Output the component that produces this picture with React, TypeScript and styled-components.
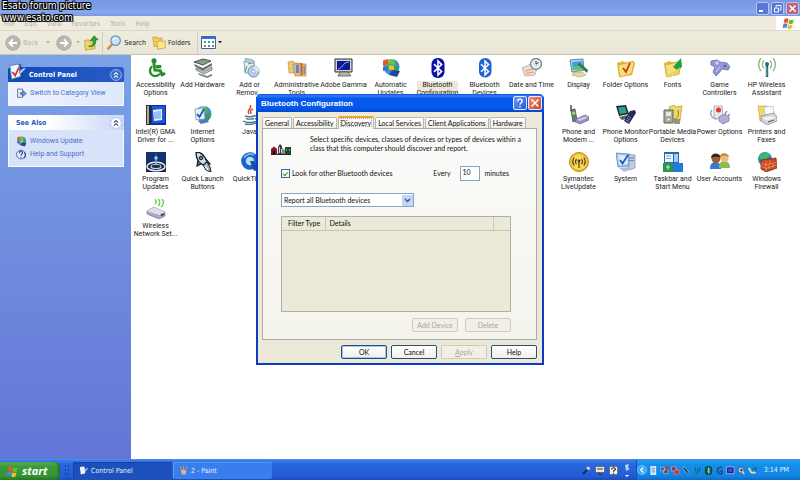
import React, { ReactNode } from 'react';
import styled, { createGlobalStyle, css } from 'styled-components';

const UI = `"DejaVu Sans Condensed", "DejaVu Sans", "Noto Sans", sans-serif`;
const LABEL = `Roboto, "Noto Sans", sans-serif`;
const CLASSIC = `Lato, "Liberation Sans", Arial, sans-serif`;

const GlobalStyle = createGlobalStyle`
  *, *::before, *::after { box-sizing: border-box; }
  body { margin: 0; background: #fff; font: 7px/8px ${UI}; color: #222; }
  button, input, select { font: inherit; color: inherit; margin: 0; padding: 0; border: 0; background: none; }
  svg { display: block; flex: none; }
`;

/* ---------- window frame ---------- */

const Page = styled.div`
  position: relative;
  display: flex;
  flex-direction: column;
  min-height: 100vh;
  overflow: hidden;
`;

const Watermark = styled.div`
  position: absolute;
  left: 2px;
  top: 0;
  z-index: 5;
  font: 10px/12px ${UI};
  color: #fff;
  text-shadow: 1px 0 #000, -1px 0 #000, 0 1px #000, 0 -1px #000, 1px 1px #000, -1px -1px #000, 1px -1px #000,
    -1px 1px #000;
`;

const TitleBar = styled.header`
  display: flex;
  justify-content: flex-end;
  align-items: center;
  gap: 2px;
  height: 16px;
  padding: 0 1px;
  background: linear-gradient(#7a98e4 0, #7d9ce6 40%, #86a8ec 75%, #7b96e0 100%);
`;

const CaptionButton = styled.button<{ $close?: boolean }>`
  display: grid;
  place-items: center;
  width: 13px;
  height: 13px;
  border: 1px solid #b6c6f0;
  border-radius: 2px;
  background: ${(p) => (p.$close ? '#bb6678' : '#5577d8')};
`;

const MenuBar = styled.nav`
  display: flex;
  align-items: center;
  gap: 10px;
  height: 15px;
  padding-left: 4px;
  background: #eeebde;
  border-bottom: 1px solid #dcd8c8;
`;

const MenuItem = styled.button`
  padding-top: 1px;
  color: #b2b0a8;
`;

const FlagBox = styled.div`
  display: grid;
  place-items: center;
  width: 24px;
  height: 14px;
  margin-left: auto;
  background: #fff;
`;

const ToolBar = styled.div`
  display: flex;
  align-items: center;
  gap: 3px;
  height: 24px;
  padding-left: 5px;
  background: linear-gradient(#efecdf, #e9e6d6);
  border-bottom: 1px solid #c9c5b4;
`;

const Tool = styled.button<{ $dim?: boolean }>`
  display: flex;
  align-items: center;
  gap: 2px;
  height: 20px;
  color: ${(p) => (p.$dim ? '#b3b1a8' : '#222')};
`;

const Spacer = styled.span<{ $w: number }>`
  width: ${(p) => p.$w}px;
`;

const Divider = styled.span`
  width: 1px;
  height: 22px;
  background: #d2cebf;
`;

const Body = styled.div`
  display: flex;
  flex: 1;
`;

/* ---------- side bar ---------- */

const Side = styled.aside`
  display: flex;
  flex-direction: column;
  gap: 9px;
  width: 131px;
  flex: none;
  padding: 12px 7px 0 8px;
  background: linear-gradient(#7ba2e7, #6375d6);
`;

const Panel = styled.section`
  background: linear-gradient(90deg, #eff3fd, #dfe8fb);
`;

const PanelHead = styled.h2<{ $primary?: boolean }>`
  display: flex;
  align-items: center;
  height: 15px;
  margin: 0;
  padding: 0 2px 0 8px;
  border-radius: 2px 2px 0 0;
  font: bold 7px/8px ${UI};
  color: #2a56bd;
  background: linear-gradient(90deg, #fff 35%, #c8d5f7);
  ${(p) =>
    p.$primary &&
    css`
      padding-left: 0;
      color: #fff;
      background: linear-gradient(90deg, #0f4ab8, #2a5cc9);
    `}
`;

const HeadIcon = styled.span`
  display: block;
  margin: -6px 3px 0 0;
`;

const Collapse = styled.button`
  margin-left: auto;
`;

const LinkList = styled.ul<{ $tall?: boolean }>`
  display: flex;
  flex-direction: column;
  gap: 3px;
  margin: 0;
  padding: 6px 7px 7px;
  list-style: none;
  font-family: ${LABEL};
  background: ${(p) => (p.$tall ? '#d8e2f9' : 'transparent')};
  border: 1px solid #f6f8fe;
  border-top: 0;
`;

const SideLink = styled.a`
  display: flex;
  align-items: center;
  gap: 3px;
  height: 10px;
  color: #4a70c8;
  text-decoration: none;
  white-space: nowrap;
`;

/* ---------- icon grid ---------- */

const IconGrid = styled.main`
  flex: 1;
  display: grid;
  grid-template-columns: repeat(auto-fill, 47px);
  grid-auto-rows: min-content;
  align-content: start;
  row-gap: 5px;
  padding: 3px 0 0 1px;
  background: #fff;
  font-family: ${LABEL};
`;

const Item = styled.button<{ $col?: number }>`
  display: flex;
  flex-direction: column;
  align-items: center;
  justify-content: flex-start;
  gap: 3px;
  min-width: 0;
  height: 42px;
  ${(p) => p.$col && `grid-column-start: ${p.$col};`}
`;

const ItemLabel = styled.span<{ $selected?: boolean }>`
  white-space: pre;
  text-align: center;
  line-height: 8px;
  background: ${(p) => (p.$selected ? '#ece9d8' : 'none')};
`;

/* ---------- dialog ---------- */

const Dialog = styled.section`
  position: absolute;
  left: 256px;
  top: 94px;
  width: 288px;
  border: 2px solid #0c3cc4;
  border-top: 0;
  border-radius: 5px 5px 0 0;
  background: #ece9d8;
  font: 7px/9px ${CLASSIC};
  color: #111;
`;

const DialogTitle = styled.header`
  display: flex;
  align-items: center;
  gap: 1px;
  height: 18px;
  margin: 0 -2px;
  padding: 0 2px 0 5px;
  border-radius: 5px 5px 0 0;
  background: linear-gradient(#0a4fd8 0, #2f7df5 10%, #0658ea 25%, #0459ec 75%, #0448cc 100%);
  h1 {
    flex: 1;
    margin: 0;
    padding-top: 1px;
    font: bold 8px/12px "Liberation Sans", Arial, sans-serif;
    color: #fff;
  }
`;

const DialogCaption = styled.button<{ $close?: boolean }>`
  display: grid;
  place-items: center;
  width: 14px;
  height: 14px;
  border: 1px solid #e4ebfb;
  border-radius: 2px;
  background: ${(p) =>
    p.$close ? 'linear-gradient(135deg, #ee8f74, #d4441c)' : 'linear-gradient(135deg, #6f9cf4, #2458dc)'};
`;

const DialogBody = styled.div`
  padding: 4px 5px 4px 4px;
`;

const Tabs = styled.div`
  display: flex;
  align-items: flex-end;
  gap: 1px;
  height: 12px;
`;

const Tab = styled.button<{ $active?: boolean }>`
  height: 11px;
  padding: 0 2px;
  border: 1px solid #b5b8b4;
  border-bottom: 0;
  border-radius: 2px 2px 0 0;
  background: linear-gradient(#fff, #f0efe6);
  white-space: nowrap;
  ${(p) =>
    p.$active &&
    css`
      height: 13px;
      margin-bottom: -1px;
      border-top: 2px solid #e9a13a;
      background: #fbfbf9;
      outline: 1px dotted #a8a8a0;
      outline-offset: -3px;
    `}
`;

const TabPage = styled.div`
  display: flex;
  flex-direction: column;
  padding: 4px 25px 7px 18px;
  border: 1px solid #a9aca6;
  background: linear-gradient(#fbfbfa, #f4f3ec);
`;

const Intro = styled.div`
  display: flex;
  align-items: center;
  gap: 19px;
  margin-left: -10px;
  margin-right: -20px;
  p {
    margin: 0;
    white-space: nowrap;
  }
`;

const IntroIcon = styled.span`
  margin-top: 10px;
`;

const ScanRow = styled.div`
  display: flex;
  align-items: center;
  justify-content: space-between;
  margin-top: 11px;
`;

const Check = styled.label`
  display: flex;
  align-items: center;
  gap: 2px;
  input {
    appearance: none;
    display: grid;
    place-items: center;
    width: 9px;
    height: 9px;
    border: 1px solid #3c6a94;
    background: #f8faf8;
  }
  input:checked::after {
    content: '';
    width: 3px;
    height: 5px;
    margin-top: -1px;
    border: solid #25a52b;
    border-width: 0 1px 1px 0;
    transform: rotate(45deg);
  }
`;

const Interval = styled.label`
  display: flex;
  align-items: center;
  gap: 5px;
  margin-right: 2px;
  input {
    width: 20px;
    height: 15px;
    margin-left: 4px;
    padding: 0 0 3px 2px;
    border: 1px solid #86a5c4;
    background: #fff;
  }
`;

const SelectBox = styled.div`
  display: grid;
  grid-template-columns: 1fr 11px;
  align-items: center;
  width: 133px;
  height: 14px;
  margin-top: 12px;
  border: 1px solid #86a5c4;
  background: #fff;
  select {
    grid-area: 1 / 1 / 2 / 3;
    appearance: none;
    width: 100%;
    height: 12px;
    padding-left: 2px;
  }
  svg {
    grid-area: 1 / 2;
    pointer-events: none;
  }
`;

const ListFrame = styled.div`
  min-height: 96px;
  margin-top: 9px;
  border: 1px solid #a9b0a8;
  background: #ece9d8;
`;

const ListTable = styled.table`
  width: 100%;
  border-collapse: collapse;
  table-layout: fixed;
  th {
    height: 13px;
    padding: 0 0 0 4px;
    border-right: 1px solid #cbc7b8;
    border-bottom: 1px solid #c8c4b0;
    font-weight: normal;
    text-align: left;
  }
  th:first-child {
    padding-left: 6px;
  }
  th:last-child {
    border-right: 0;
  }
`;

const ButtonRow = styled.div<{ $gap: number; $top: number }>`
  display: flex;
  justify-content: flex-end;
  gap: ${(p) => p.$gap}px;
  margin-top: ${(p) => p.$top}px;
`;

const PushButton = styled.button<{ $default?: boolean }>`
  width: 46px;
  height: 14px;
  border: 1px solid #24507e;
  border-radius: 2px;
  background: linear-gradient(#fff, #f0efe8);
  ${(p) => p.$default && 'box-shadow: inset 0 0 0 1px #a8c4f0;'}
  &:disabled {
    border-color: #cdcabb;
    background: #f2f0e6;
    color: #aaa799;
  }
`;

/* ---------- task bar ---------- */

const TaskBar = styled.footer`
  display: flex;
  align-items: stretch;
  height: 21px;
  border-top: 1px solid #4a8cf0;
  background: linear-gradient(#3a80ee 0, #2a66de 20%, #245cd8 80%, #1d4cb8 100%);
  color: #e8f0ff;
`;

const Start = styled.button`
  display: flex;
  align-items: center;
  gap: 3px;
  width: 60px;
  margin-top: 2px;
  padding-left: 6px;
  border-radius: 0 5px 5px 0;
  background: linear-gradient(#5fb358 0, #3c9a3a 25%, #359434 75%, #287a28 100%);
  box-shadow: inset -2px 0 2px #2a7228;
  font: italic bold 11px/14px "Open Sans", "Noto Sans", sans-serif;
  color: #fff;
`;

const Grip = styled.span`
  width: 5px;
  margin: 4px 4px 3px;
  background: radial-gradient(circle, #163fa4 1px, transparent 1px) 0 0 / 3px 4px;
`;

const Task = styled.button<{ $active?: boolean }>`
  display: flex;
  align-items: center;
  gap: 3px;
  width: 99px;
  margin: 2px 1px 1px 0;
  padding-left: 6px;
  border-radius: 2px;
  background: ${(p) => (p.$active ? '#1e50bc' : '#3a7eee')};
  box-shadow: inset 1px 1px ${(p) => (p.$active ? '#1841a0' : '#5a98f6')};
`;

const Quick = styled.div`
  display: flex;
  align-items: center;
  gap: 4px;
  margin-left: auto;
  padding-right: 5px;
`;

const Tray = styled.div`
  display: flex;
  align-items: center;
  gap: 2px;
  width: 164px;
  background: linear-gradient(#2a9cf0 0, #1490ea 20%, #1284e2 80%, #0e6cc8 100%);
  border-left: 1px solid #1552b8;
`;

const Clock = styled.time`
  margin-left: auto;
  padding-right: 11px;
`;

/* ---------- drawings ---------- */

const Svg = ({ s = 20, h, vb, children }: { s?: number; h?: number; vb?: string; children: ReactNode }) => (
  <svg width={s} height={h ?? s} viewBox={vb ?? '0 0 20 20'} aria-hidden="true">
    {children}
  </svg>
);

const Rune = ({ w = 1.5 }: { w?: number }) => (
  <path d="M6 6.2l7.6 7.2L10 17V3l3.6 3.6L6 13.8" fill="none" stroke="#fff" strokeWidth={w} />
);

const Flag = ({ s = 14 }: { s?: number }) => (
  <Svg s={s} vb="0 0 16 16">
    <path d="M3 2.5c2-1.3 3.500-.9 5 0L7 7.500c-1.500-.9-3-1-5 0z" fill="#e8582c" />
    <path d="M9 3c1.500.9 3 1 5.500 0l-1.300 5c-2 1-3.700.9-5.200 0z" fill="#6fb52e" />
    <path d="M1.800 8.500c2-1.200 3.500-.9 5 0l-1.200 5c-1.600-.9-3-1-5 0z" fill="#4a84e4" />
    <path d="M7.800 9c1.500.9 3 1 5.200 0l-1.300 5c-2 1-3.700.9-5.100 0z" fill="#f6bd27" />
  </Svg>
);

const folder = (
  <>
    <path d="M1 5l6-2 2 1.500L17 3l2 2-3 12-13 2z" fill="#e0b63c" />
    <path d="M2 7l15-3.500 1 2L15.500 16 4 19z" fill="#f7e07a" stroke="#c99b2c" strokeWidth=".7" />
  </>
);

const globe = (
  <>
    <circle cx="10.500" cy="9" r="8" fill="#3f8fd8" />
    <path d="M5 4c3-3 7-3 10-.5l-1 4-3 1-1 4-3-2-3-.5z" fill="#4fb657" />
    <path d="M14 9l4-1c.4 3-1 6-4 8l-2-3z" fill="#3a9c50" />
    <path d="M5 5c2-2.500 5-3.500 7-3" stroke="#bfe6ff" fill="none" />
  </>
);

const art: Record<string, ReactNode> = {
  access: (
    <g fill="none" stroke="#218c2b" strokeWidth="3" strokeLinecap="round">
      <circle cx="8" cy="2.800" r="1.800" fill="#218c2b" strokeWidth="1.500" />
      <path d="M8 6l1 6 5 .2 2 4.500 2-.8M9 8.800l5-.3" />
      <path d="M5.500 9a5 5 0 1 0 7.500 7.500" strokeWidth="2.400" />
      <path d="M9 6l1 5 5 .5" stroke="#62c965" strokeWidth=".8" />
    </g>
  ),
  hardware: (
    <>
      <path d="M1 4l9-3 8 2-8 4z" fill="#8f9893" stroke="#4a514e" />
      <path d="M1 6l9 4 9-5v2.500l-9 5-8-4z" fill="#5f6d64" />
      <path d="M3 10l8 3 8-4v3l-8 4-8-4z" fill="#b8bdc4" stroke="#55585f" strokeWidth=".6" />
      <path d="M5 15l9 3 5-2v2l-5 2-8-3z" fill="#7c838b" />
      <path d="M6 4l5-1.500" stroke="#5eb35d" />
      <path d="M5 7.500l5 2 6-3.500" stroke="#dfe5e4" strokeWidth=".8" fill="none" />
    </>
  ),
  addRemove: (
    <>
      <path d="M4 3h10l1 12H5z" fill="#e6eef8" stroke="#8aa0bd" />
      <path d="M5 0l8 2 1 4-8-2z" fill="#b9cbe0" stroke="#7d93b0" strokeWidth=".6" />
      <path d="M7 8l-2 6M8 6l3-1" stroke="#48a35c" />
      <circle cx="13.500" cy="13.500" r="5.500" fill="#b9cdf0" stroke="#7286b5" />
      <path d="M13.500 8a5.500 5.500 0 0 1 5.500 5.500h-4z" fill="#d9f0d6" />
      <circle cx="13.500" cy="13.500" r="1.600" fill="#fff" stroke="#7286b5" strokeWidth=".6" />
    </>
  ),
  admin: (
    <>
      <path d="M1 4l5-1 2 2h5v10H2z" fill="#eec768" stroke="#b78e3a" strokeWidth=".6" />
      <path d="M6 6h13v12H8z" fill="#e3bd72" stroke="#9c7d4a" strokeWidth=".6" />
      <path d="M9 7h3v8H9z" fill="#5a86cf" />
      <path d="M13.500 5h2v12h-2z" fill="#c65b38" />
      <path d="M16.500 8H18v8h-1.500z" fill="#7e8ba8" />
      <circle cx="7" cy="10" r="2" fill="#9fb4d8" />
    </>
  ),
  gamma: (
    <>
      <path d="M1 1h17v13H1z" fill="#d7d3c7" stroke="#2c2c34" />
      <path d="M3 3h13v9H3z" fill="#10179c" />
      <path d="M4 11c4-1 5-4 6-5s3-2 5-2" stroke="#6ecbff" fill="none" />
      <path d="M6 14h8l3 4H4z" fill="#b8b4a8" stroke="#44444c" strokeWidth=".7" />
    </>
  ),
  update: (
    <>
      {globe}
      <path d="M2 2.500l5-1.500v5L2 8z" fill="#e5562c" />
      <path d="M8 1l5 1.500v4L8 6z" fill="#7cc03a" />
      <path d="M2 9l5-1v4l-5 1z" fill="#3d73df" />
      <path d="M8 7.500l5 .5v4l-5-.5z" fill="#f4c02e" />
      <path d="M11 12l8 1-3 6-8-2z" fill="#1c4a9a" />
    </>
  ),
  btDark: (
    <>
      <rect x="3.500" y="0" width="13" height="20" rx="6" fill="#0b10a8" />
      <Rune w={1.6} />
    </>
  ),
  bt: (
    <>
      <rect x="4" y="0" width="12.500" height="19.500" rx="6" fill="#1c63d6" />
      <Rune />
    </>
  ),
  date: (
    <>
      <path d="M0 10l9-4 6 4-2 7-10 1z" fill="#efdccd" stroke="#b79a88" strokeWidth=".7" />
      <path d="M3 13l8-2M4 15.500l8-1.500" stroke="#d59a84" />
      <circle cx="14" cy="6" r="5.500" fill="#dfeaf0" stroke="#77858f" strokeWidth="1.300" />
      <path d="M14 3v3.200l2.500-1.700" stroke="#38434c" fill="none" />
    </>
  ),
  display: (
    <>
      <path d="M1 2l13-1 1 11-12 2z" fill="#b7d3ee" stroke="#5b7fa8" />
      <path d="M3 4l10-1 .7 8L4 12z" fill="#3ba0e0" />
      <path d="M3 11c3-5 6-2 10-4v4l-9 1z" fill="#5cc26a" />
      <path d="M8 6l10 9 1-3-8-7z" fill="#2e7d45" />
      <path d="M5 14h8l4 3-6 2-8-2z" fill="#e0d9a0" stroke="#a39b6c" strokeWidth=".6" />
    </>
  ),
  folderOpt: (
    <>
      {folder}
      <path d="M7 10l3 4 4-9" stroke="#d4341c" strokeWidth="1.800" fill="none" />
    </>
  ),
  fonts: (
    <>
      {folder}
      <path d="M10 9l8-9 1 9-5 3z" fill="#24a04a" />
      <path d="M3 16c5 0 9-2 14-7l-2 8-11 2z" fill="#ead05c" />
    </>
  ),
  game: (
    <>
      <path d="M1 3l6-1 3 2 7 1 3 4-2 3-6-1-3 4-3 3-3-4 2-5-4-2z" fill="#9495d4" stroke="#62639f" strokeWidth=".7" />
      <circle cx="7" cy="5" r="1.800" fill="#d3d4f3" />
      <circle cx="15" cy="8" r="1.300" fill="#5c5d9e" />
      <path d="M6 14l4-5" stroke="#d0d0f2" />
    </>
  ),
  wireless: (
    <g fill="none">
      <path d="M7 2.500a6 6 0 0 0 0 8M13 2.500a6 6 0 0 1 0 8M4 0a10 10 0 0 0 0 13M16 0a10 10 0 0 1 0 13" stroke="#8cbc84" strokeWidth="1.500" />
      <circle cx="10" cy="6" r="2" fill="#2a6f83" />
      <path d="M10 7v12" stroke="#1d6177" strokeWidth="2.400" />
      <path d="M9.700 9v9" stroke="#86c3cc" strokeWidth=".7" />
    </g>
  ),
  intel: (
    <>
      <path d="M0 0h20v20H0z" fill="#0c2f9c" />
      <path d="M1 1h4v18H1z" fill="#caa742" />
      <path d="M3 1h2v18H3z" fill="#182454" />
      <path d="M6 1h13v17H6z" fill="#1b56d4" />
      <path d="M7 5l9-1v11l-8 1z" fill="#e9f2fd" />
      <path d="M8 7l7-1.500V14H8z" fill="#9cc0f2" />
    </>
  ),
  internet: (
    <>
      {globe}
      <path d="M2 4l9-1 1 11-9 1z" fill="#e6effa" stroke="#6688b8" strokeWidth=".7" />
      <path d="M4 9l2.500 3L11 4" stroke="#2553b0" strokeWidth="1.800" fill="none" />
      <path d="M5 16l9-2 2 3-8 2z" fill="#4f7ab8" />
    </>
  ),
  java: (
    <g fill="none">
      <path d="M10 0c3 3-4 5-1 9M13 4c-4 2-2 3-2 5" stroke="#da4534" strokeWidth="1.500" />
      <path d="M5 11c3 1 7 1 10-.5M6 13.500c3 1 5 1 8 0M15 11c3-1 3 2 0 3" stroke="#4d7196" strokeWidth="1.400" />
      <path d="M3 16c4 2 11 2 14 0M5 19c4 .7 8 .5 11-1" stroke="#4d7196" strokeWidth="1.300" />
    </g>
  ),
  phone: (
    <>
      <path d="M2 5l4-1 2 11-4 2z" fill="#6b7a72" stroke="#364039" strokeWidth=".7" />
      <path d="M2 0v6" stroke="#444" strokeWidth="1.400" />
      <path d="M3 7l3-.7.5 3-3 .7z" fill="#93dc74" />
      <path d="M7 14l9-4 4 2v3l-9 4-5-2z" fill="#9391c4" stroke="#5f5c90" strokeWidth=".6" />
      <path d="M8 14.500l8-3 3 1-8 3.500z" fill="#cccbe8" />
    </>
  ),
  monitor: (
    <>
      <path d="M0 1l10-1 3 9-10 2z" fill="#22282c" />
      <path d="M2 2.500l7-.8 2 6-7 1.500z" fill="#21a199" />
      <path d="M3 12l9-2 2 3-8 2z" fill="#555d60" />
      <path d="M14 6l5-1 1 3-7 11-5-3z" fill="#2b2b50" />
      <path d="M12 11l3 2M11 13l3 2M10 15l3 1.500" stroke="#8585cd" />
    </>
  ),
  media: (
    <>
      <path d="M6 2l5-2 2 2 6-1-2 15H9z" fill="#f1d866" stroke="#bd9a2d" strokeWidth=".7" />
      <path d="M1 5h9v13H1z" fill="#aaafa4" stroke="#5e635b" />
      <path d="M3 7h5v4H3z" fill="#dfeadc" />
      <circle cx="5.500" cy="14.500" r="1.800" fill="#e8e8e4" stroke="#666" strokeWidth=".5" />
      <path d="M11 14c4 0 5-4 4-9" stroke="#8e7b26" fill="none" />
      <path d="M11 14h6v5h-6z" fill="#8e968c" />
    </>
  ),
  power: (
    <>
      <path d="M4 1h8l1 11-7 2-2-2z" fill="#ebe5e8" stroke="#a6a0ac" strokeWidth=".8" />
      <circle cx="8.500" cy="5" r="2.500" fill="#d93a2a" />
      <path d="M2 5c-3 4 0 9 5 9" stroke="#a3a2cb" strokeWidth="1.500" fill="none" />
      <path d="M9 12l6-3 4 3v4l-6 3-4-3z" fill="#b0aed8" stroke="#6e6b9f" strokeWidth=".7" />
      <path d="M15 9l2-3M18 11l2-2" stroke="#77749c" strokeWidth="1.200" />
    </>
  ),
  printer: (
    <>
      <path d="M1 1h9l1 13-8 2z" fill="#f3d768" stroke="#c09c3a" strokeWidth=".6" />
      <path d="M7 2l9-1 1 9H8z" fill="#f8faff" stroke="#9faec5" strokeWidth=".6" />
      <path d="M4 11l13-3 3 4v4l-10 4-6-4z" fill="#d5d5d8" stroke="#83838e" strokeWidth=".7" />
      <path d="M5 13l8-1.500 6 1-9 3z" fill="#f4f4f6" />
      <path d="M11 17l6-2" stroke="#5a5d66" />
    </>
  ),
  program: (
    <>
      <path d="M0 0h20v20H0z" fill="#123272" />
      <path d="M0 12c6-4 14-4 20 0v8H0z" fill="#1a2342" />
      <ellipse cx="10" cy="14.500" rx="9" ry="4.200" fill="none" stroke="#e6edf6" strokeWidth="1.500" />
      <ellipse cx="10" cy="14.500" rx="5" ry="2" fill="none" stroke="#c6d2e2" strokeWidth="1.200" />
      <path d="M10 0l1 12H9z" fill="#6ab1ef" />
      <circle cx="10" cy="6" r="1.800" fill="#9ccbf6" />
    </>
  ),
  launch: (
    <>
      <path d="M3 0c5 0 9 4 11 10l-4 3C6 11 3 7 3 0z" fill="#d6dfe8" stroke="#15181c" strokeWidth="1.300" />
      <circle cx="8" cy="6" r="1.800" fill="#4c86b8" stroke="#15181c" />
      <path d="M5 8l-1 6 4-2M13 7l4 5-3 1" fill="#56687a" stroke="#15181c" strokeWidth="1.200" />
      <path d="M10 13l4-3 3 5 1 5-5-2z" fill="#9bb1c4" stroke="#15181c" />
      <path d="M12 14l3 4" stroke="#fff" strokeWidth="1.300" />
    </>
  ),
  quicktime: (
    <>
      <circle cx="10" cy="9" r="9" fill="#b8dcf4" />
      <circle cx="10" cy="9" r="6.500" fill="none" stroke="#1b63c8" strokeWidth="4.500" />
      <path d="M10 9h4l5 9-5 1z" fill="#174fa8" />
      <path d="M4 6c2-4 7-5 10-3" stroke="#7fc4fa" fill="none" strokeWidth="1.500" />
    </>
  ),
  symantec: (
    <>
      <circle cx="10" cy="10" r="9.500" fill="#eec02c" stroke="#b38a1e" />
      <circle cx="10" cy="10" r="7.500" fill="#f9d95c" />
      <path d="M10 9v7M7.500 7a4 4 0 0 0 0 5M12.500 7a4 4 0 0 1 0 5M5.200 5.500a7 7 0 0 0 0 8M14.800 5.500a7 7 0 0 1 0 8" stroke="#4d3d14" strokeWidth="1.200" fill="none" />
      <circle cx="10" cy="9" r="1.400" fill="#4d3d14" />
    </>
  ),
  system: (
    <>
      <path d="M11 2l8 1v13l-6 2z" fill="#c2cbe4" stroke="#7482ae" strokeWidth=".6" />
      <path d="M13 6h5M13 8.500h5" stroke="#7482ae" />
      <path d="M0 1l13 1v12L2 15z" fill="#a5c7f2" stroke="#5779b2" strokeWidth=".7" />
      <path d="M2 3l9.500.7V12L3 13z" fill="#d7ecff" />
      <path d="M4 8l2.500 3.500L12 3" stroke="#1c55a8" strokeWidth="1.700" fill="none" />
      <path d="M3 16l10-1 4 2-9 3z" fill="#b3bcd8" />
    </>
  ),
  taskbar: (
    <>
      <path d="M1 0h15v20H1z" fill="#2869ba" />
      <path d="M2 2h8v8H2z" fill="#e9f4fb" />
      <path d="M11 2h4v8h-4z" fill="#9fd0f2" />
      <path d="M3 4h5M3 6.500h5" stroke="#7ba6cf" />
      <path d="M0 11h10v9H0z" fill="#2e9447" />
      <path d="M10 11h10v9H10z" fill="#2579d8" />
      <path d="M5 13v5M3 15h4" stroke="#c1ebc4" />
    </>
  ),
  users: (
    <>
      <path d="M0 17c0-5 2-7 5.500-7S11 12 11 17z" fill="#3b78d6" />
      <path d="M9 16c0-5 2-7 5.500-7s5.500 3 5.500 7z" fill="#8dbb4c" />
      <circle cx="6" cy="6.500" r="4.500" fill="#9a5f35" />
      <path d="M1 6c0-6 9-6 10 0-4-2-6-1-10 0z" fill="#33251e" />
      <circle cx="14.500" cy="6" r="4" fill="#f0b883" />
      <path d="M10 5c0-5 8-5 9 0-3-2-6-2-9 0z" fill="#c68227" />
    </>
  ),
  firewall: (
    <>
      <circle cx="8" cy="7" r="7" fill="#2888c0" />
      <path d="M2 4c3-4 8-4 11-1l-4 4-5 1z" fill="#3eb86a" />
      <path d="M4 8l15-2 1 10-11 4-5-3z" fill="#c9481f" stroke="#7d2409" strokeWidth=".7" />
      <path d="M4 11l5 2 11-3M4 14l5 2.500L20 13M9 9v10M13 8v4M16 12v4M12 13v4" stroke="#f4a37c" strokeWidth=".7" fill="none" />
    </>
  ),
  network: (
    <>
      <path d="M9 5c1.500-1 1.500-3 0-4.500M12 7c2.500-2 2.500-5 0-7.500M15 8c3-2 3-6 1-8" stroke="#52c936" strokeWidth="1.200" fill="none" />
      <path d="M1 12l7-4 11 5v4l-6 3L1 15z" fill="#aaa9c4" stroke="#6c6a8c" strokeWidth=".6" />
      <path d="M1 12l7-4 11 5-6 3z" fill="#deddeb" />
      <path d="M15 16.500l3-1.500" stroke="#3a3a58" strokeWidth="1.500" />
    </>
  ),
};

type Entry = { icon: string; label: string; col?: number; selected?: boolean };

const entries: Entry[] = [
  { icon: 'access', label: 'Accessibility\nOptions' },
  { icon: 'hardware', label: 'Add Hardware' },
  { icon: 'addRemove', label: 'Add or\nRemov...' },
  { icon: 'admin', label: 'Administrative\nTools' },
  { icon: 'gamma', label: 'Adobe Gamma' },
  { icon: 'update', label: 'Automatic\nUpdates' },
  { icon: 'btDark', label: 'Bluetooth\nConfiguration', selected: true },
  { icon: 'bt', label: 'Bluetooth\nDevices' },
  { icon: 'date', label: 'Date and Time' },
  { icon: 'display', label: 'Display' },
  { icon: 'folderOpt', label: 'Folder Options' },
  { icon: 'fonts', label: 'Fonts' },
  { icon: 'game', label: 'Game\nControllers' },
  { icon: 'wireless', label: 'HP Wireless\nAssistant' },
  { icon: 'intel', label: 'Intel(R) GMA\nDriver for ...', col: 1 },
  { icon: 'internet', label: 'Internet\nOptions' },
  { icon: 'java', label: 'Java' },
  { icon: 'phone', label: 'Phone and\nModem ...', col: 10 },
  { icon: 'monitor', label: 'Phone Monitor\nOptions' },
  { icon: 'media', label: 'Portable Media\nDevices' },
  { icon: 'power', label: 'Power Options' },
  { icon: 'printer', label: 'Printers and\nFaxes' },
  { icon: 'program', label: 'Program\nUpdates', col: 1 },
  { icon: 'launch', label: 'Quick Launch\nButtons' },
  { icon: 'quicktime', label: 'QuickTime' },
  { icon: 'symantec', label: 'Symantec\nLiveUpdate', col: 10 },
  { icon: 'system', label: 'System' },
  { icon: 'taskbar', label: 'Taskbar and\nStart Menu' },
  { icon: 'users', label: 'User Accounts' },
  { icon: 'firewall', label: 'Windows\nFirewall' },
  { icon: 'network', label: 'Wireless\nNetwork Set...', col: 1 },
];

const Round = ({ back }: { back?: boolean }) => (
  <Svg s={16}>
    <circle cx="10" cy="10" r="9" fill="#b9b8b2" stroke="#a3a29c" />
    <path
      d={back ? 'M15 10H6M10 5.500L5.500 10l4.500 4.500' : 'M5 10h9M10 5.500l4.500 4.500-4.500 4.500'}
      stroke="#fff"
      strokeWidth="2.200"
      fill="none"
    />
  </Svg>
);

const Caret = ({ color = '#b3b1a8' }: { color?: string }) => (
  <Svg s={4} h={3} vb="0 0 4 3">
    <path d="M0 0h4L2 2.500z" fill={color} />
  </Svg>
);

const Chevron = ({ light }: { light?: boolean }) => (
  <Svg s={12}>
    <circle cx="10" cy="10" r="9" fill={light ? '#fff' : '#3d6bd0'} stroke={light ? '#b7c5ea' : '#a8bdf0'} strokeWidth="1.500" />
    <path d="M6.500 9.500L10 6l3.500 3.500M6.500 14.500L10 11l3.500 3.500" stroke={light ? '#2a3f80' : '#fff'} strokeWidth="1.700" fill="none" />
  </Svg>
);

const PanelArt = () => (
  <Svg s={18}>
    <path d="M2 4l12-3 3 15-13 3z" fill="#1c4a9c" />
    <path d="M2 3l10-2 2 14-10 3z" fill="#f4f7fc" stroke="#5877a8" />
    <path d="M5 10l3 4 4-9" stroke="#c43a30" strokeWidth="2" fill="none" />
    <path d="M12 10l6-5 1.500 1.500L14 12z" fill="#bfe0f5" stroke="#447" strokeWidth=".6" />
  </Svg>
);

const CategoryArt = () => (
  <Svg s={11}>
    <path d="M3 2h9v15H3z" fill="#eef3fb" stroke="#4a66a0" strokeWidth="1.600" />
    <path d="M8 8h5V5l6 5-6 5v-3H8z" fill="#6a96dc" stroke="#2d4c88" />
  </Svg>
);

const HelpArt = () => (
  <Svg s={11}>
    <circle cx="9" cy="10" r="8" fill="#e9effc" stroke="#46609a" strokeWidth="1.600" />
    <path d="M6 7.500c0-4 6-4 6-.5 0 2.500-3 2-3 5M9 13.500V16" stroke="#2b4ea6" strokeWidth="2.200" fill="none" />
    <path d="M15 6c3 3 3 8-1 11" stroke="#2d488c" strokeWidth="2" fill="none" />
  </Svg>
);

const ClassArt = () => (
  <Svg s={20} h={12} vb="0 0 20 12">
    <path d="M0 6l3-2.500L6 6v5H0z" fill="#7b1822" />
    <path d="M2 8h2v3H2z" fill="#2a0a0c" />
    <path d="M7 4l2-3 2 2v8H7z" fill="#3a3a3c" />
    <path d="M8 4h1v6H8zM10 6h1v4h-1z" fill="#d9d9d2" />
    <path d="M11 5l3 2v4h-3z" fill="#888" />
    <path d="M14 4h6v7h-6z" fill="#1c4a2a" />
    <path d="M15 6h1v2h-1zM18 6h1v2h-1z" fill="#6fa06e" />
    <path d="M0 11h20v1H0z" fill="#29292b" />
  </Svg>
);

const trayArt: { name: string; art: ReactNode }[] = [
  {
    name: 'Document',
    art: (
      <>
        <path d="M3 0h13v20H3z" fill="#d5e9fb" />
        <path d="M6 5h7M6 9h7M6 13h7" stroke="#5a93cf" strokeWidth="2" />
      </>
    ),
  },
  {
    name: 'Network unplugged',
    art: (
      <>
        <path d="M1 3h9v8H1zM8 8h10v9H8z" fill="#41537e" stroke="#b3c4e4" strokeWidth="1.500" />
        <path d="M12 1l7 7M19 1l-7 7" stroke="#e02a2a" strokeWidth="3" />
      </>
    ),
  },
  {
    name: 'Network',
    art: (
      <>
        <path d="M1 2h10v9H1z" fill="#7d334c" stroke="#cdb0c6" strokeWidth="1.500" />
        <path d="M7 9h11v9H7z" fill="#d02c3b" stroke="#e2b3bb" />
      </>
    ),
  },
  { name: 'Pen', art: <path d="M3 1l9 8 5 8-3 2-6-6-6-8z" fill="#26405f" stroke="#9bc3e2" strokeWidth="1.500" /> },
  {
    name: 'Wireless',
    art: <path d="M10 6v13M6 3c-2 3-2 6 0 9M14 3c2 3 2 6 0 9" stroke="#1f5b68" strokeWidth="2.500" fill="none" />,
  },
  {
    name: 'Bluetooth',
    art: (
      <>
        <rect x="2" y="0" width="16" height="20" rx="7" fill="#0b4440" />
        <path d="M6 6l8 7-4 4V3l4 4-8 7" stroke="#7df0c8" strokeWidth="1.700" fill="none" />
      </>
    ),
  },
  {
    name: 'Sync',
    art: <path d="M16 4a7 7 0 1 0 0 12v-5h-6" fill="none" stroke="#204c84" strokeWidth="3.500" />,
  },
  {
    name: 'Display',
    art: (
      <>
        <path d="M1 2h17v15H1z" fill="#16209c" stroke="#d0d8f4" strokeWidth="1.500" />
        <path d="M5 6h9v7H5z" fill="#3a52e0" />
      </>
    ),
  },
  {
    name: 'Volume',
    art: (
      <>
        <circle cx="9" cy="9" r="7" fill="#b8c3d0" stroke="#3f5874" strokeWidth="2" />
        <circle cx="10" cy="9" r="3" fill="#384c66" />
        <path d="M12 12l4 6" stroke="#d8dfe8" strokeWidth="3" />
      </>
    ),
  },
  {
    name: 'Power',
    art: (
      <>
        <path d="M2 4l5 10 10 1" stroke="#d9e4b2" strokeWidth="4" fill="none" />
        <path d="M9 9l8-6 1 9" stroke="#265a36" strokeWidth="2" fill="none" />
      </>
    ),
  },
];

export default function App() {
  return (
    <Page>
      <GlobalStyle />
      <Watermark>
        Esato forum picture
        <br />
        www.esato.com
      </Watermark>
      <TitleBar>
        <CaptionButton aria-label="Minimize">
          <Svg s={9} vb="0 0 9 9">
            <path d="M1 6h4v2H1z" fill="#fff" />
          </Svg>
        </CaptionButton>
        <CaptionButton aria-label="Restore">
          <Svg s={9} vb="0 0 9 9">
            <path d="M3 3V1.500h5V6H6.500M1.500 4h4v4h-4z" stroke="#fff" fill="none" />
          </Svg>
        </CaptionButton>
        <CaptionButton aria-label="Close window" $close>
          <Svg s={9} vb="0 0 9 9">
            <path d="M1.500 1.500l6 6M7.500 1.500l-6 6" stroke="#fff" strokeWidth="1.500" />
          </Svg>
        </CaptionButton>
      </TitleBar>
      <MenuBar>
        {['File', 'Edit', 'View', 'Favorites', 'Tools', 'Help'].map((m) => (
          <MenuItem key={m}>{m}</MenuItem>
        ))}
        <FlagBox>
          <Flag s={13} />
        </FlagBox>
      </MenuBar>
      <ToolBar>
        <Tool $dim>
          <Round back />
          Back
          <Spacer $w={4} />
          <Caret />
        </Tool>
        <Spacer $w={0} />
        <Tool $dim aria-label="Forward">
          <Round />
          <Spacer $w={0} />
          <Caret />
        </Tool>
        <Tool aria-label="Up">
          <Svg s={16}>
            <path d="M2 7l5-1 2 2 6-1v10L3 19z" fill="#f2d466" stroke="#c39a35" />
            <path d="M7 14c5 0 6-3 6-7H9l5-6 5 5h-3c0 6-3 10-9 8z" fill="#2ba33a" stroke="#18742a" strokeWidth=".8" />
          </Svg>
        </Tool>
        <Divider />
        <Tool>
          <Svg s={16}>
            <path d="M2 18l6-7" stroke="#c88c5c" strokeWidth="3" />
            <circle cx="12" cy="7" r="6" fill="#c7e4f8" stroke="#6b93bd" strokeWidth="1.500" />
            <path d="M9 6c1-2 3-2.500 4-2" stroke="#fff" strokeWidth="1.500" fill="none" />
          </Svg>
          Search
        </Tool>
        <Spacer $w={0} />
        <Tool>
          <Svg s={14}>
            <path d="M1 2l5-1 2 2h6v11l-11 1z" fill="#efcd5c" stroke="#bd9430" />
            <path d="M7 8l5-1 1 1 6-1v10L8 19z" fill="#fbe68a" stroke="#c39a35" />
          </Svg>
          Folders
        </Tool>
        <Spacer $w={0} />
        <Divider />
        <Tool aria-label="Views">
          <Svg s={15} h={13} vb="0 0 15 13">
            <path d="M.5.5h14v12H.5z" fill="#fff" stroke="#3766a4" />
            <path d="M1 1h13v2H1z" fill="#2f74d4" />
            <path d="M3 5h2v2H3zM7 5h2v2H7z" fill="#4f88c8" />
            <path d="M11 5h2v2h-2zM3 9h2v2H3z" fill="#3f9a68" />
            <path d="M7 9h2v2H7zM11 9h2v2h-2z" fill="#6b7f9d" />
          </Svg>
          <Caret color="#222" />
        </Tool>
      </ToolBar>
      <Body>
        <Side>
          <Panel>
            <PanelHead $primary>
              <HeadIcon>
                <PanelArt />
              </HeadIcon>
              Control Panel
              <Collapse aria-label="Collapse Control Panel">
                <Chevron />
              </Collapse>
            </PanelHead>
            <LinkList>
              <li>
                <SideLink href="#category">
                  <CategoryArt />
                  Switch to Category View
                </SideLink>
              </li>
            </LinkList>
          </Panel>
          <Panel>
            <PanelHead>
              See Also
              <Collapse aria-label="Collapse See Also">
                <Chevron light />
              </Collapse>
            </PanelHead>
            <LinkList $tall>
              <li>
                <SideLink href="#update">
                  <Svg s={11}>{art.update}</Svg>
                  Windows Update
                </SideLink>
              </li>
              <li>
                <SideLink href="#help">
                  <HelpArt />
                  Help and Support
                </SideLink>
              </li>
            </LinkList>
          </Panel>
        </Side>
        <IconGrid>
          {entries.map((e) => (
            <Item key={e.label} $col={e.col}>
              <Svg>{art[e.icon]}</Svg>
              <ItemLabel $selected={e.selected}>{e.label}</ItemLabel>
            </Item>
          ))}
        </IconGrid>
      </Body>

      <Dialog role="dialog" aria-labelledby="dialog-title">
        <DialogTitle>
          <h1 id="dialog-title">Bluetooth Configuration</h1>
          <DialogCaption aria-label="Context help">
            <Svg s={10}>
              <path d="M5.500 7c0-6 9-6 9-1 0 4-4.500 3-4.500 7.500M10 16v3" stroke="#fff" strokeWidth="2.600" fill="none" />
            </Svg>
          </DialogCaption>
          <DialogCaption aria-label="Close dialog" $close>
            <Svg s={10}>
              <path d="M3 3l14 14M17 3L3 17" stroke="#fff" strokeWidth="3" />
            </Svg>
          </DialogCaption>
        </DialogTitle>
        <DialogBody>
          <Tabs role="tablist">
            {['General', 'Accessibility', 'Discovery', 'Local Services', 'Client Applications', 'Hardware'].map((t) => (
              <Tab key={t} role="tab" aria-selected={t === 'Discovery'} $active={t === 'Discovery'}>
                {t}
              </Tab>
            ))}
          </Tabs>
          <TabPage role="tabpanel">
            <Intro>
              <IntroIcon>
                <ClassArt />
              </IntroIcon>
              <p>
                Select specific devices, classes of devices or types of devices within a
                <br />
                class that this computer should discover and report.
              </p>
            </Intro>
            <ScanRow>
              <Check>
                <input type="checkbox" defaultChecked />
                Look for other Bluetooth devices
              </Check>
              <Interval>
                Every
                <input type="text" defaultValue="10" />
                minutes
              </Interval>
            </ScanRow>
            <SelectBox>
              <select aria-label="Devices to report" defaultValue="all">
                <option value="all">Report all Bluetooth devices</option>
              </select>
              <Svg s={11} vb="0 0 11 11">
                <path d="M0 0h11v11H0z" fill="#c3d4fc" />
                <path d="M3 4l2.500 2.500L8 4" stroke="#40568c" strokeWidth="1.500" fill="none" />
              </Svg>
            </SelectBox>
            <ListFrame>
              <ListTable>
                <colgroup>
                  <col width="43" />
                  <col />
                  <col width="17" />
                </colgroup>
                <thead>
                  <tr>
                    <th>Filter Type</th>
                    <th>Details</th>
                    <th aria-label="Extra" />
                  </tr>
                </thead>
              </ListTable>
            </ListFrame>
            <ButtonRow $gap={7} $top={6}>
              <PushButton disabled>Add Device</PushButton>
              <PushButton disabled>Delete</PushButton>
            </ButtonRow>
          </TabPage>
          <ButtonRow $gap={4} $top={5}>
            <PushButton $default>OK</PushButton>
            <PushButton>Cancel</PushButton>
            <PushButton disabled>
              <u>A</u>pply
            </PushButton>
            <PushButton>Help</PushButton>
          </ButtonRow>
        </DialogBody>
      </Dialog>

      <TaskBar>
        <Start>
          <Flag s={13} />
          start
        </Start>
        <Grip />
        <Task $active>
          <Svg s={9}>
            <path d="M2 2l10-1 2 15-10 3z" fill="#f2f6fc" />
            <path d="M12 9l6-5 2 2-6 7z" fill="#9fc8ea" />
          </Svg>
          Control Panel
        </Task>
        <Task>
          <Svg s={9}>
            <path d="M4 9h12l-1 10H6z" fill="#c7b7a2" />
            <path d="M6 9L3 1M10 9V0M14 9l4-7" stroke="#e4893c" strokeWidth="2.500" />
          </Svg>
          2 - Paint
        </Task>
        <Quick>
          <Svg s={9}>
            <path d="M2 18L13 7" stroke="#1c2436" strokeWidth="3.500" />
            <circle cx="14" cy="5" r="4" fill="#c8ccd4" />
          </Svg>
          <Svg s={10}>
            <path d="M1 3h18v12H1z" fill="#eceadf" stroke="#333" />
            <path d="M4 8h12M8 15v4h6" stroke="#333" strokeWidth="2" fill="none" />
          </Svg>
          <Svg s={9}>
            <path d="M1 1h18v18H1z" fill="#f4f1e4" stroke="#222" />
            <path d="M6 8c0-5 8-5 8-1 0 3-4 2-4 6M10 15v2" stroke="#111" strokeWidth="2.300" fill="none" />
          </Svg>
          <Svg s={9} h={15} vb="0 0 9 15">
            <path d="M3 2l4-1-1 4 2 1-4 2z" fill="#bcd3f5" />
            <path d="M3 12h4l-2 2z" fill="#fff" />
          </Svg>
        </Quick>
        <Tray>
          <Svg s={10}>
            <circle cx="10" cy="10" r="9.500" fill="#3fa8f8" stroke="#a5d8ff" />
            <path d="M12.500 5L7.500 10l5 5" stroke="#fff" strokeWidth="2.500" fill="none" />
          </Svg>
          {trayArt.map((t) => (
            <Svg key={t.name} s={9}>
              {t.art}
            </Svg>
          ))}
          <Clock>3:14 PM</Clock>
        </Tray>
      </TaskBar>
    </Page>
  );
}
